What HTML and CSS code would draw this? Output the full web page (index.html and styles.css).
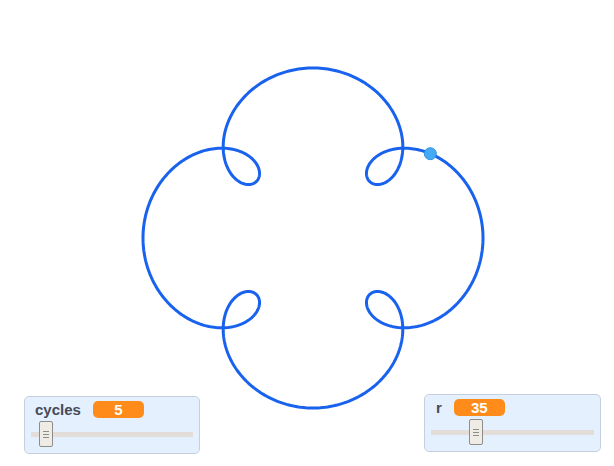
FILE: index.html
```html
<!DOCTYPE html>
<html lang="en">
<head>
<meta charset="UTF-8">
<title>Spirograph</title>
<link rel="stylesheet" href="styles.css">
</head>
<body>

<div class="stage">
  <svg class="canvas" width="614" height="466" viewBox="0 0 614 466">
    <path id="curve" class="pen-line" d=""></path>
    <circle id="ball" class="ball" r="6" cx="430" cy="154"></circle>
  </svg>

  <div class="monitor monitor-cycles">
    <div class="monitor-row">
      <span class="monitor-label">cycles</span>
      <span class="monitor-value">5</span>
    </div>
    <div class="slider">
      <div class="slider-track"></div>
      <div class="slider-thumb" style="left: 8px"><i></i><i></i><i></i></div>
    </div>
  </div>

  <div class="monitor monitor-r">
    <div class="monitor-row">
      <span class="monitor-label">r</span>
      <span class="monitor-value">35</span>
    </div>
    <div class="slider">
      <div class="slider-track"></div>
      <div class="slider-thumb" style="left: 38px"><i></i><i></i><i></i></div>
    </div>
  </div>
</div>

<script>
// big circle + small circle turning "cycles" times as fast
const cx = 313, cy = 238;
const big = 125, small = 45, cycles = 5;

function point(t) {
  return [
    cx + big * Math.cos(t) + small * Math.cos(cycles * t),
    cy - (big * Math.sin(t) + small * Math.sin(cycles * t))
  ];
}

let d = '';
const steps = 900;
for (let i = 0; i <= steps; i++) {
  const p = point(i / steps * Math.PI * 2);
  d += (i === 0 ? 'M' : 'L') + p[0].toFixed(2) + ' ' + p[1].toFixed(2) + ' ';
}
document.getElementById('curve').setAttribute('d', d);

const here = point(0.32);
const ball = document.getElementById('ball');
ball.setAttribute('cx', here[0].toFixed(2));
ball.setAttribute('cy', here[1].toFixed(2));
</script>
</body>
</html>
```

FILE: styles.css
```css
body {
  margin: 0;
  background-color: white;
  font-family: "Liberation Sans", Arial, sans-serif;
}

.stage {
  position: relative;
  width: 614px;
  height: 466px;
  overflow: hidden;
  background-color: white;
}

.canvas {
  display: block;
}

.pen-line {
  fill: none;
  stroke: #1862ee;
  stroke-width: 3;
  stroke-linejoin: round;
}

.ball {
  fill: #45aaf4;
  stroke: #2f92e6;
  stroke-width: 1;
}

/* slider monitors sit on the stage */
.monitor {
  position: absolute;
  box-sizing: border-box;
  width: 177px;
  height: 58px;
  padding: 4px 6px 6px 6px;
  background-color: #e5f0ff;
  border: 1px solid #c5d0de;
  border-radius: 5px;
}

.monitor-cycles {
  left: 24px;
  top: 396px;
  width: 176px;
}

.monitor-r {
  left: 424px;
  top: 394px;
}

.monitor-row {
  display: flex;
  align-items: center;
  height: 17px;
  margin-left: 4px;
}

.monitor-label {
  font-size: 15px;
  font-weight: bold;
  color: #464b58;
  margin-right: 12px;
}

.monitor-r .monitor-label {
  margin-left: 1px;
}

.monitor-value {
  box-sizing: border-box;
  min-width: 51px;
  height: 17px;
  line-height: 17px;
  padding: 0 6px;
  border-radius: 5px;
  background-color: #ff8c1a;
  color: white;
  font-size: 15px;
  font-weight: bold;
  text-align: center;
}

.slider {
  position: relative;
  height: 26px;
  margin-top: 3px;
  display: flex;
  align-items: center;
}

.slider-track {
  flex: 1;
  height: 5px;
  background-color: #e2ddd8;
}

.slider-thumb {
  position: absolute;
  top: 0;
  box-sizing: border-box;
  width: 14px;
  height: 26px;
  background-color: #efebe5;
  border: 1px solid #8f8d8a;
  border-radius: 2px;
  display: flex;
  flex-direction: column;
  align-items: center;
  justify-content: center;
  gap: 2px;
}

.slider-thumb i {
  display: block;
  width: 6px;
  height: 1px;
  background-color: #8f8d8a;
}
```
